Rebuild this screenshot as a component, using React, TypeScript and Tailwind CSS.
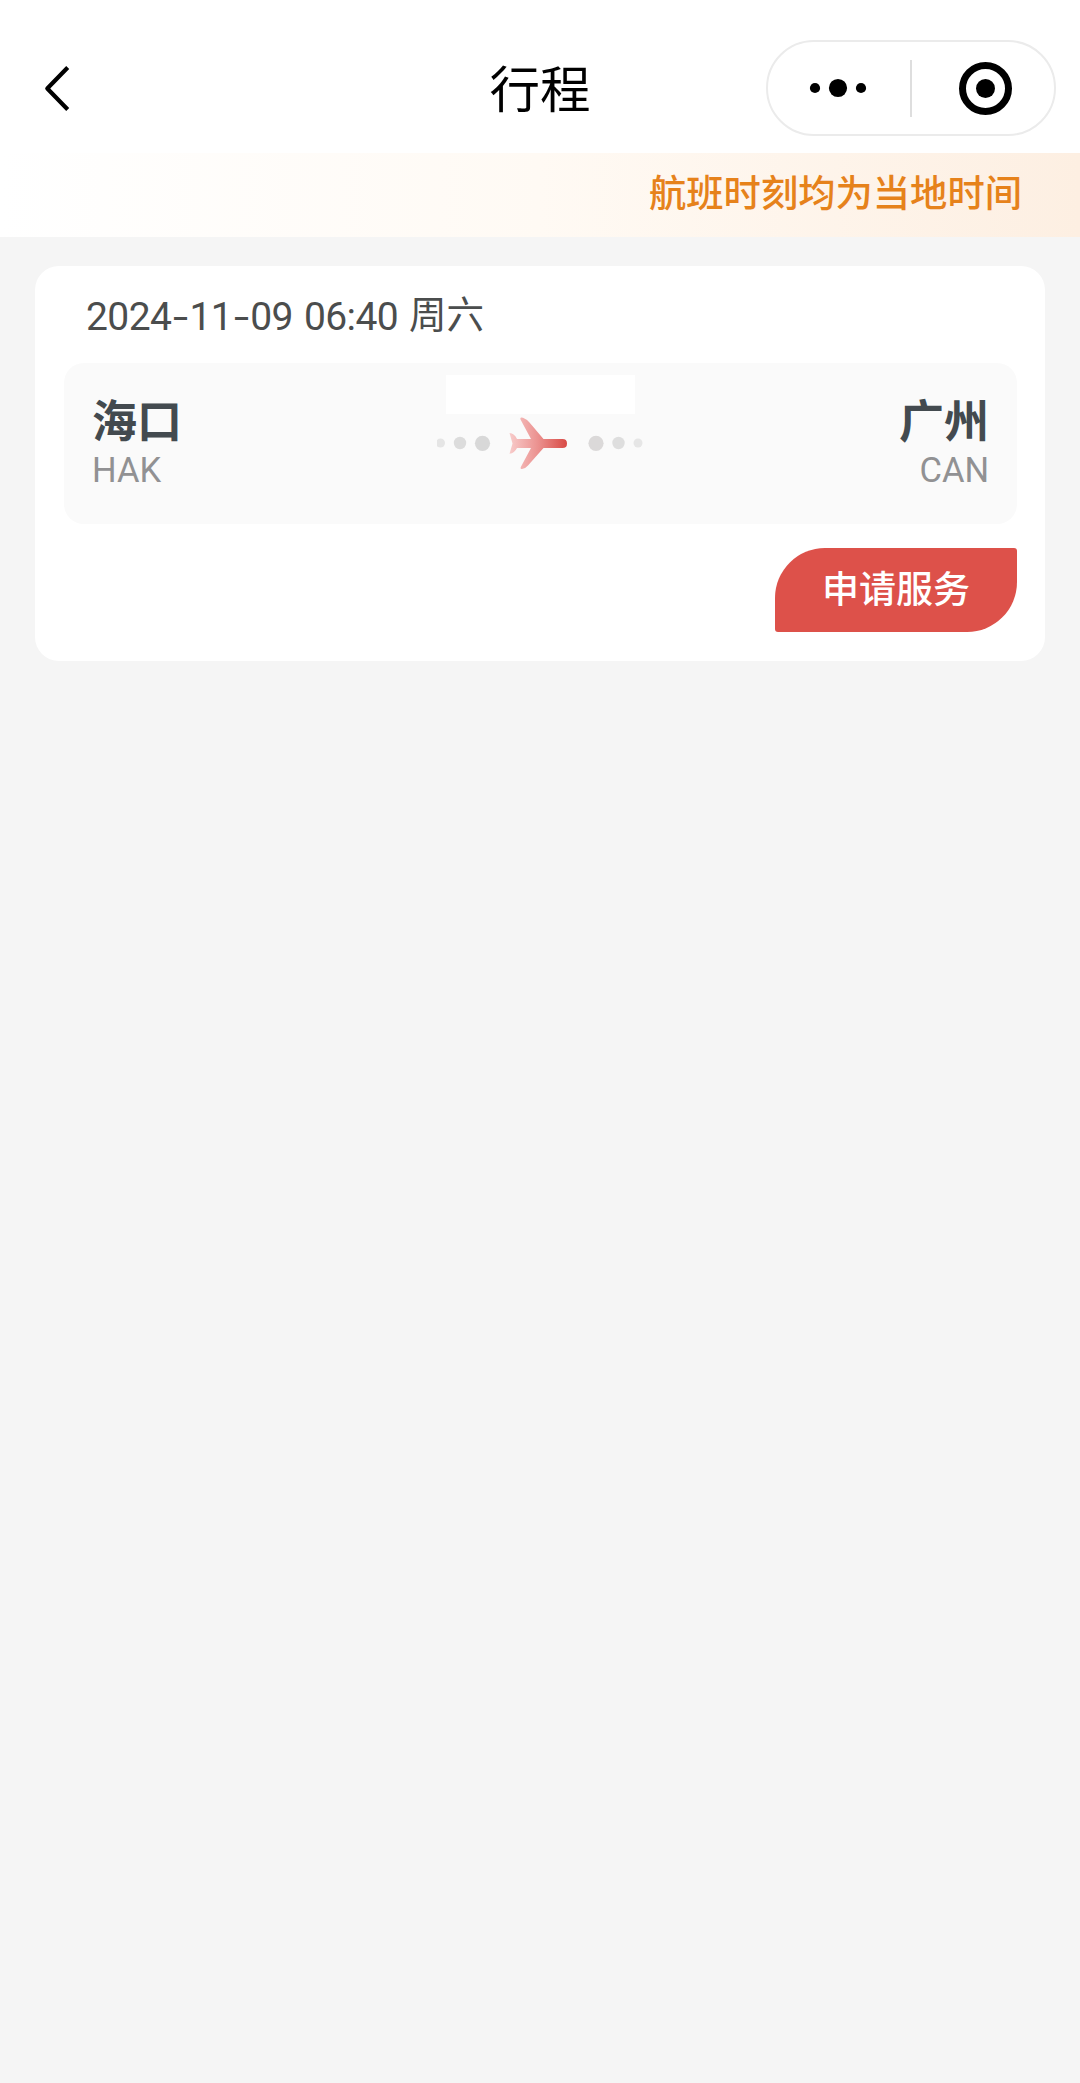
import React from 'react'

const TRIP = {
  date: ['2024', '11', '09'],
  time: '06:40',
  weekday: '周六',
  from: { city: '海口', code: 'HAK' },
  to: { city: '广州', code: 'CAN' },
}

function NavBar() {
  return (
    <header className="grid h-[153px] grid-cols-[1fr_auto_1fr] items-start bg-white px-6 pt-10">
      <button aria-label="返回" className="ml-[15px] flex h-24 w-10 items-center">
        <svg width="36" height="52" viewBox="0 0 36 52" fill="none">
          <path d="M28.7 5.500 L8.300 26.500 L28.7 47.500" stroke="#000" strokeWidth="4.2" strokeLinejoin="round" />
        </svg>
      </button>
      <h1 className="flex h-[92px] items-center text-[50.5px] leading-none text-black">行程</h1>
      <MenuCapsule />
    </header>
  )
}

function MenuCapsule() {
  return (
    <div className="flex h-24 w-[290px] items-center justify-self-end rounded-full border-2 border-[#ebebeb]">
      <button aria-label="更多" className="flex w-[142px] items-center justify-center">
        <svg width="60" height="20" viewBox="0 0 60 20">
          <circle cx="6" cy="10" r="5.1" />
          <circle cx="29" cy="10" r="9.1" />
          <circle cx="52" cy="10" r="5.1" />
        </svg>
      </button>
      <div className="h-[57px] w-0.5 bg-[#dedede]" />
      <button aria-label="关闭" className="flex flex-1 items-center justify-center pl-1.5">
        <svg width="54" height="54" viewBox="0 0 54 54">
          <circle cx="26.5" cy="27.5" r="23" fill="none" stroke="#000" strokeWidth="7" />
          <circle cx="26.5" cy="27.5" r="9.5" />
        </svg>
      </button>
    </div>
  )
}

function Notice() {
  return (
    <div className="flex h-[84px] items-center justify-end bg-linear-to-r from-white via-[#fffaf4] to-[#fdefe2] pr-[58px] pb-1.5">
      <p className="text-[37.3px] leading-none font-medium text-[#e6821b]">航班时刻均为当地时间</p>
    </div>
  )
}

function FlightPath() {
  return (
    <svg width="208" height="60" viewBox="437 414 208 60">
      <defs>
        <linearGradient id="plane" x1="509" y1="0" x2="567" y2="0" gradientUnits="userSpaceOnUse">
          <stop offset="0" stopColor="#f8cccb" />
          <stop offset="0.5" stopColor="#eb918f" />
          <stop offset="1" stopColor="#d84a45" />
        </linearGradient>
      </defs>
      <circle cx="440.5" cy="443" r="4.5" fill="#e5e5e5" />
      <circle cx="460" cy="443" r="6.2" fill="#dcdcdc" />
      <circle cx="482.5" cy="443.3" r="7.6" fill="#d8d8d8" />
      <path
        d="M509.5 433 Q514.500 433.500 517 439 H531 L520.500 419.500 Q519.500 416.500 523 417.800 Q527 419.500 529.500 422.500 L543.500 439 H562.500 Q567 439 567 443.400 Q567 448 562.500 448 H543.500 L528 465.500 Q525.500 468.500 522 469 Q520 469 520.800 467 L531 448 H517 Q514.500 453 509.500 453.800 L512.500 443.400 Z"
        fill="url(#plane)"
      />
      <circle cx="596" cy="443.3" r="7.6" fill="#dbd9d9" />
      <circle cx="618.5" cy="443" r="6.2" fill="#dedede" />
      <circle cx="638" cy="443" r="4.5" fill="#e6e6e6" />
    </svg>
  )
}

function TripCard() {
  return (
    <section className="mx-[35px] mt-[29px] h-[395px] rounded-3xl bg-white pr-7 pl-[29px]">
      <p className="flex h-[97px] items-center pt-[5px] pl-[22px] font-['Roboto','Noto_Sans_CJK_SC',sans-serif] text-[39px] leading-none tracking-[-0.6px] text-[#4b4d4d]">
        {TRIP.date.map((part, idx) => (
          <React.Fragment key={idx}>
            {idx > 0 && <span className="mx-1 inline-block scale-x-140">-</span>}
            <span>{part}</span>
          </React.Fragment>
        ))}
        <span className="ml-[11px]">{TRIP.time}</span>
        <span className="ml-[11px] pb-0.5 text-[37.5px] tracking-normal">{TRIP.weekday}</span>
      </p>

      <div className="grid h-[161px] grid-cols-[1fr_auto_1fr] rounded-[20px] bg-[#fafafa] px-7">
        <div className="flex flex-col items-start pt-8">
          <span className="text-[45px] leading-[48px] font-bold text-[#434a4f]">{TRIP.from.city}</span>
          <span className="mt-[7px] font-['Roboto',sans-serif] text-[34.5px] leading-[40px] text-[#919193]">{TRIP.from.code}</span>
        </div>
        <div className="flex flex-col items-center pt-3">
          <div className="h-[39px] w-[189px] bg-white" />
          <FlightPath />
        </div>
        <div className="flex flex-col items-end pt-8">
          <span className="text-[45px] leading-[48px] font-bold text-[#434a4f]">{TRIP.to.city}</span>
          <span className="mt-[7px] font-['Roboto',sans-serif] text-[34.5px] leading-[40px] text-[#919193]">{TRIP.to.code}</span>
        </div>
      </div>

      <div className="mt-6 flex justify-end">
        <button className="h-[84px] w-[242px] rounded-tl-[50px] rounded-tr-[3px] rounded-br-[50px] rounded-bl-[3px] bg-[#dd514a] pb-1.5 text-[37px] leading-none font-medium text-white">
          申请服务
        </button>
      </div>
    </section>
  )
}

export default function App() {
  return (
    <div className="min-h-screen bg-[#f5f5f5] font-['Noto_Sans_CJK_SC',sans-serif]">
      <NavBar />
      <Notice />
      <main>
        <TripCard />
      </main>
    </div>
  )
}
